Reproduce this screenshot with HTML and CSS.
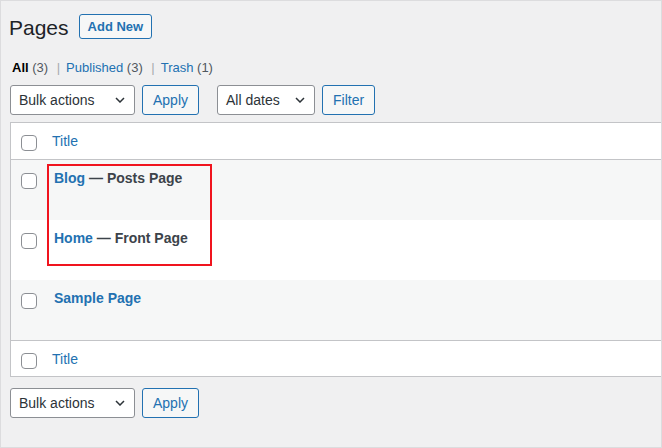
FILE: index.html
```html
<!DOCTYPE html>
<html lang="en">
<head>
  <meta charset="UTF-8">
  <meta name="viewport" content="width=device-width, initial-scale=1.0">
  <title>Pages</title>
  <link rel="stylesheet" href="styles.css">
</head>
<body>
  <div class="wrap">
    <div class="page-head">
      <h1>Pages</h1>
      <a class="btn-outline add-new">Add New</a>
    </div>

    <ul class="subsubsub">
      <li><a class="current">All <span class="count">(3)</span></a><span class="sep">|</span></li>
      <li><a>Published <span class="count">(3)</span></a><span class="sep">|</span></li>
      <li><a>Trash <span class="count">(1)</span></a></li>
    </ul>

    <div class="tablenav">
      <div class="actions">
        <div class="select bulk">
          <span>Bulk actions</span>
          <svg width="10" height="6" viewBox="0 0 10 6"><path d="M1 1l4 4 4-4" fill="none" stroke="#2c3338" stroke-width="1.5"/></svg>
        </div>
        <button class="btn-outline">Apply</button>
      </div>
      <div class="actions">
        <div class="select dates">
          <span>All dates</span>
          <svg width="10" height="6" viewBox="0 0 10 6"><path d="M1 1l4 4 4-4" fill="none" stroke="#2c3338" stroke-width="1.5"/></svg>
        </div>
        <button class="btn-outline">Filter</button>
      </div>
    </div>

    <div class="list">
      <div class="list-head">
        <div class="check"><span class="checkbox"></span></div>
        <div class="col-title"><a>Title</a></div>
      </div>

      <div class="list-row alt">
        <div class="check"><span class="checkbox"></span></div>
        <div class="col-title"><strong><a>Blog</a> — <span class="post-state">Posts Page</span></strong></div>
      </div>
      <div class="list-row">
        <div class="check"><span class="checkbox"></span></div>
        <div class="col-title"><strong><a>Home</a> — <span class="post-state">Front Page</span></strong></div>
      </div>
      <div class="list-row alt">
        <div class="check"><span class="checkbox"></span></div>
        <div class="col-title"><strong><a>Sample Page</a></strong></div>
      </div>

      <div class="list-foot">
        <div class="check"><span class="checkbox"></span></div>
        <div class="col-title"><a>Title</a></div>
      </div>

      <div class="highlight"></div>
    </div>

    <div class="tablenav bottom">
      <div class="actions">
        <div class="select bulk">
          <span>Bulk actions</span>
          <svg width="10" height="6" viewBox="0 0 10 6"><path d="M1 1l4 4 4-4" fill="none" stroke="#2c3338" stroke-width="1.5"/></svg>
        </div>
        <button class="btn-outline">Apply</button>
      </div>
    </div>
  </div>
</body>
</html>
```

FILE: styles.css
```css
body {
  margin: 0;
  font-family: "Liberation Sans", Arial, sans-serif;
  color: #3c434a;
}
.wrap {
  width: 662px;
  height: 448px;
  box-sizing: border-box;
  border: 1px solid #dcdcde;
  background: #f0f0f1;
  padding: 13px 0 0 9px;
  overflow: hidden;
}
a {
  color: #2271b1;
  text-decoration: none;
}
.page-head {
  display: flex;
  align-items: flex-start;
  gap: 10px;
}
h1 {
  margin: 0 0 0 -1px;
  font-size: 21px;
  font-weight: 400;
  line-height: 27px;
  color: #1d2327;
}
.btn-outline {
  display: inline-block;
  box-sizing: border-box;
  height: 30px;
  padding: 0 10px;
  border: 1px solid #2271b1;
  border-radius: 3px;
  background: #f6f7f7;
  color: #2271b1;
  font-family: inherit;
  font-size: 14px;
  line-height: 28px;
}
.add-new {
  height: 25px;
  padding: 0 8px;
  font-size: 13px;
  font-weight: 700;
  line-height: 23px;
}
.subsubsub {
  list-style: none;
  margin: 17px 0 0;
  padding: 0;
  display: flex;
  font-size: 13px;
  line-height: 20px;
  color: #50575e;
}
.subsubsub a {
  padding: 0 2.6px 0 2px;
}
.subsubsub a.current {
  color: #000;
  font-weight: 700;
}
.subsubsub .count {
  color: #50575e;
  font-weight: 400;
}
.subsubsub .sep {
  margin: 0 4px 0 6px;
  color: #a7aaad;
}
.tablenav {
  display: flex;
  gap: 18px;
  margin-top: 7px;
  height: 30px;
}
.tablenav.bottom {
  margin-top: 11px;
}
.actions {
  display: flex;
  gap: 7px;
}
.select {
  box-sizing: border-box;
  height: 30px;
  display: flex;
  align-items: center;
  justify-content: space-between;
  padding: 0 9px 0 8px;
  border: 1px solid #8c8f94;
  border-radius: 3px;
  background: #fff;
  color: #2c3338;
  font-size: 14px;
}
.select.bulk {
  width: 125px;
}
.select.dates {
  width: 98px;
}
.list {
  position: relative;
  margin-top: 7px;
  border: 1px solid #c3c4c7;
  border-right: 0;
  background: #fff;
}
.list-head,
.list-foot,
.list-row {
  display: flex;
}
.list-head {
  height: 36px;
  border-bottom: 1px solid #c3c4c7;
}
.list-foot {
  height: 35px;
  border-top: 1px solid #c3c4c7;
}
.list-row {
  height: 60px;
}
.list-row.alt {
  background: #f6f7f7;
}
.check {
  width: 41px;
  box-sizing: border-box;
  padding: 12px 0 0 10px;
}
.list-row .check {
  padding-top: 13px;
}
.checkbox {
  display: block;
  width: 16px;
  height: 16px;
  box-sizing: border-box;
  border: 1px solid #8c8f94;
  border-radius: 4px;
  background: #fff;
}
.col-title {
  font-size: 14px;
  line-height: 20px;
}
.list-head .col-title,
.list-foot .col-title {
  align-self: center;
}
.list-row .col-title {
  padding: 8px 0 0 2px;
}
.post-state {
  color: #3c434a;
}
.highlight {
  position: absolute;
  left: 36px;
  top: 41px;
  width: 165px;
  height: 102px;
  box-sizing: border-box;
  border: 2px solid #f0141e;
}
```
